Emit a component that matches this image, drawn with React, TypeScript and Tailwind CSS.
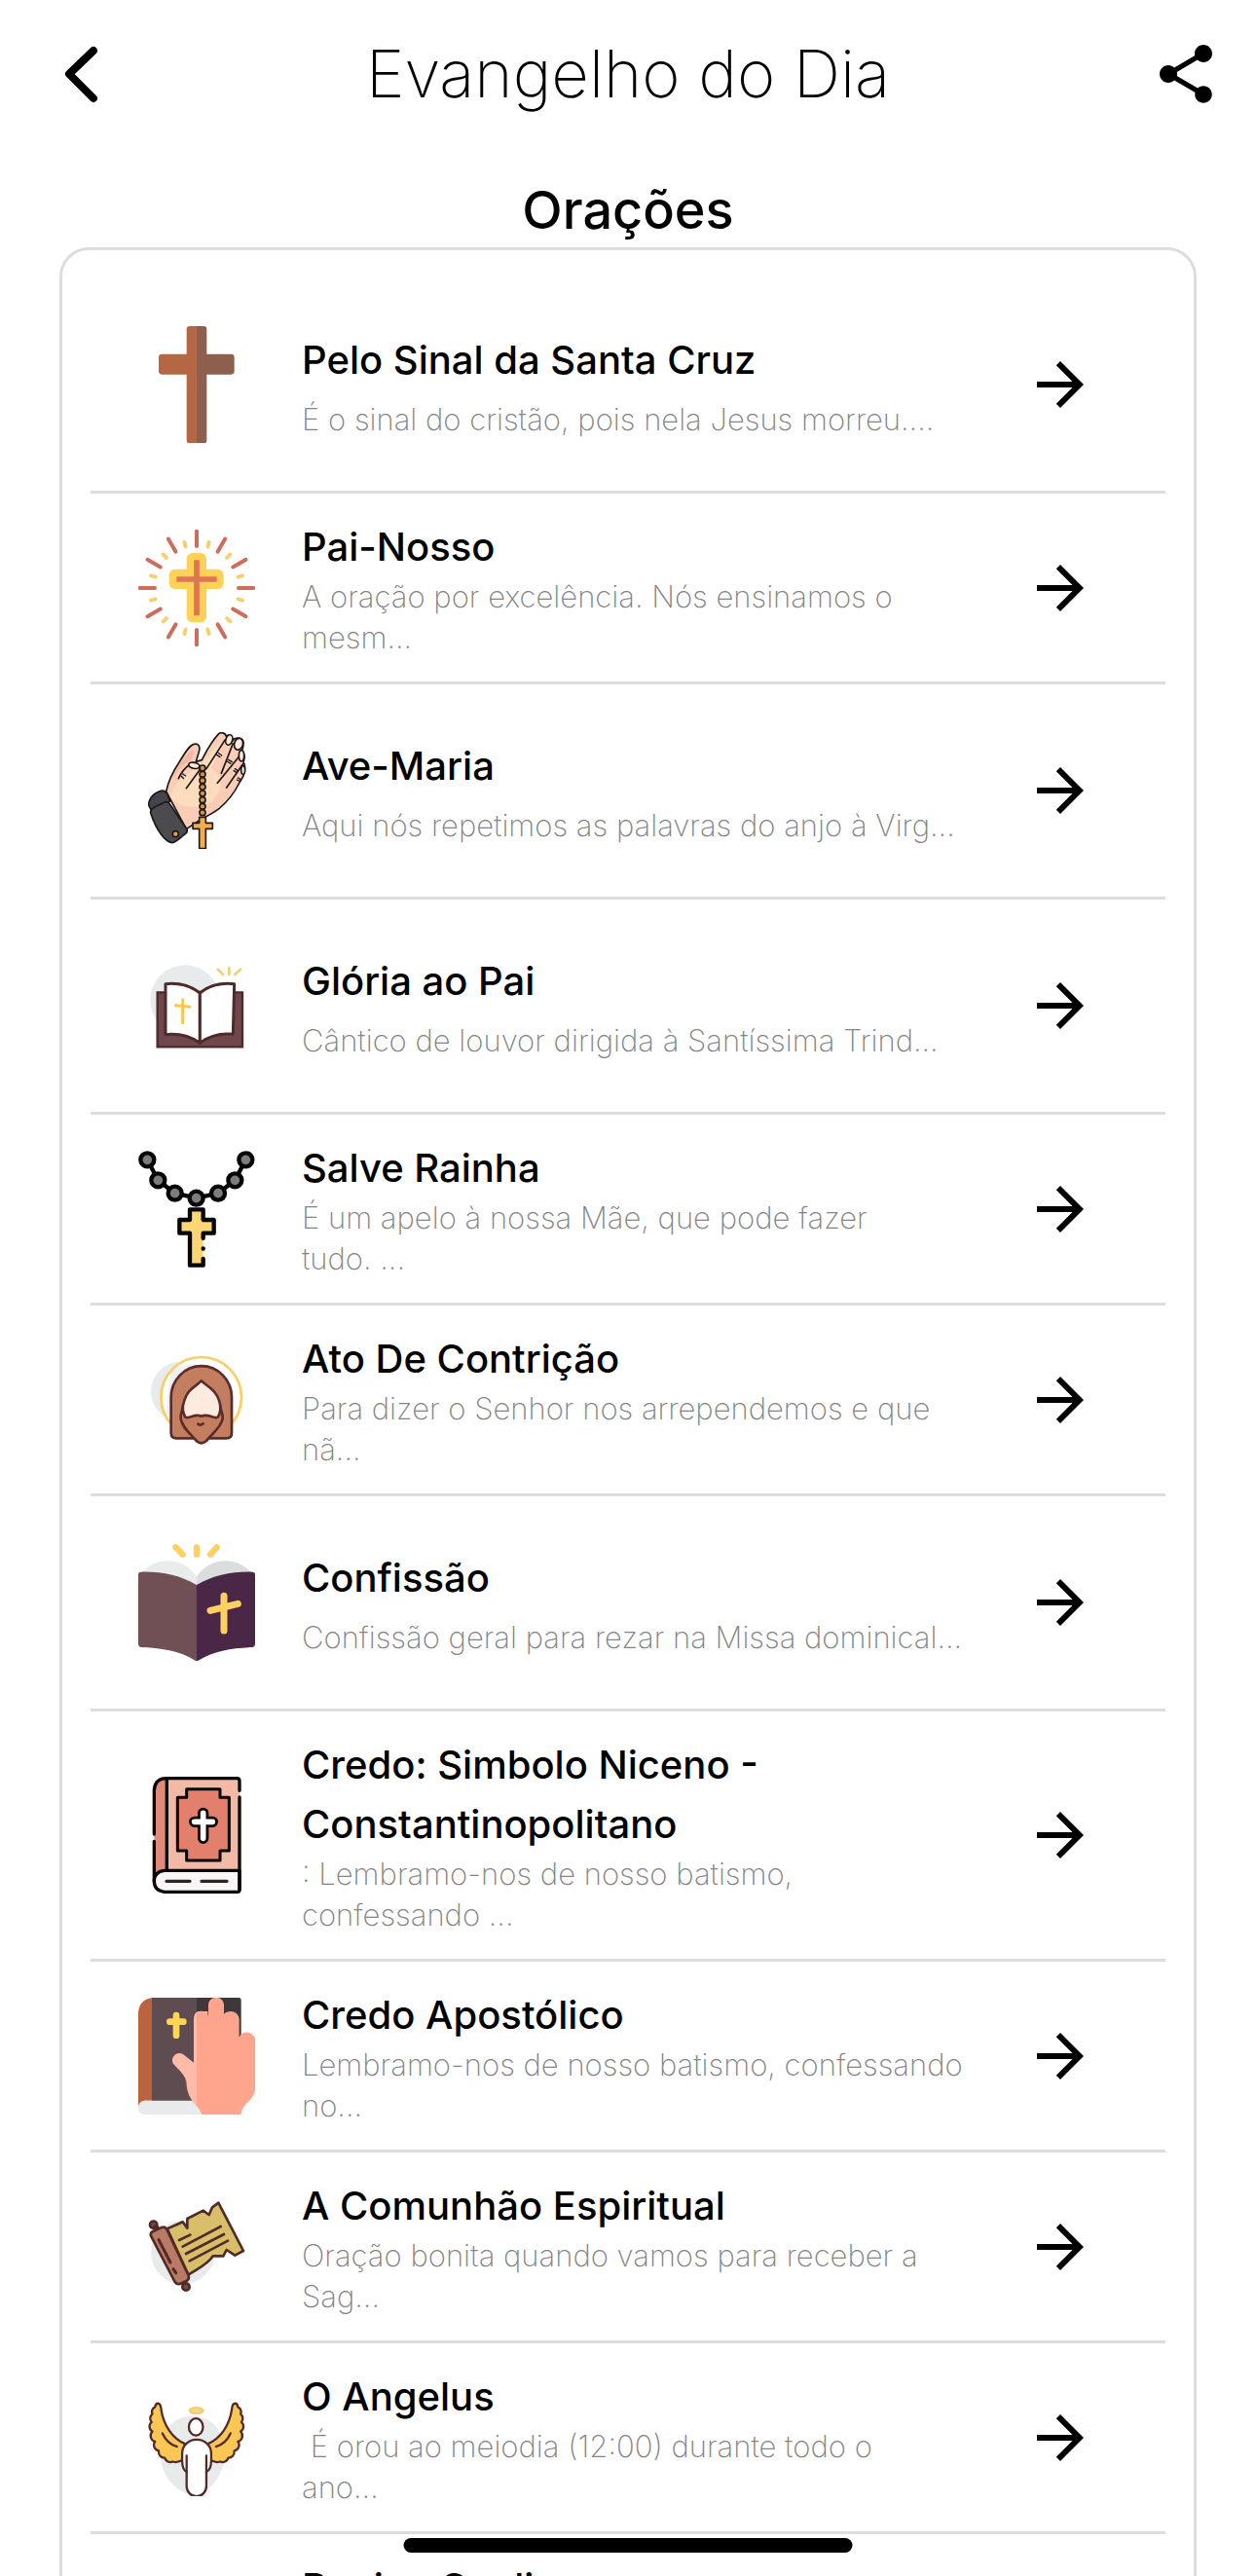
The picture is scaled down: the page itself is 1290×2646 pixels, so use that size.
import React from 'react';
import { MdArrowForward, MdShare } from 'react-icons/md';

const iconClass = 'w-[120px] h-[120px] shrink-0';

const WoodenCross = () => (
  <svg viewBox="66 78 360 360" className={iconClass} aria-hidden="true">
    <path fill="#b56643" d="M246 78h-21a10 10 0 0 0-10 10v76h-76a10 10 0 0 0-10 10v43a10 10 0 0 0 10 10h76v203a10 10 0 0 0 10 10h21z" />
    <path fill="#8d5f4c" d="M246 78h21a10 10 0 0 1 10 10v76h75a10 10 0 0 1 10 10v43a10 10 0 0 1-10 10h-75v203a10 10 0 0 1-10 10h-21z" />
  </svg>
);

const ShiningCross = () => (
  <svg viewBox="66 704 360 360" className={iconClass} strokeLinecap="round" aria-hidden="true">
    {[0, 30, 60, 90, 120, 150, 180, 210, 240, 270, 300, 330].map((angle) => (
      <g key={angle} transform={`rotate(${angle} 246 884)`}>
        <path d="M246 709v46" stroke="#ce6d5c" strokeWidth="12" />
        <path d="M246 738v14" stroke="#f5d070" strokeWidth="12" transform="rotate(15 246 884)" />
      </g>
    ))}
    <rect x="215" y="776" width="61" height="214" rx="18" fill="#ffd257" />
    <rect x="161" y="826" width="168" height="61" rx="18" fill="#ffd257" />
    <path d="M246 798v171M184 857h124" stroke="#e07552" strokeWidth="17" strokeLinecap="butt" />
  </svg>
);

const PrayingHands = () => (
  <svg viewBox="66 69 360 360" className={iconClass} stroke="#1c1818" strokeWidth="5" strokeLinecap="round" strokeLinejoin="round" fill="none" aria-hidden="true">
    <path fill="#fbcdb6" d="M152 252C158 222 172 192 192 162C208 136 222 110 238 106C252 103 258 114 253 130L244 160L262 155C278 122 298 92 312 76C320 68 334 70 337 82C344 74 358 80 356 96C364 84 388 84 390 100C391 112 388 120 385 126C394 134 394 150 390 162C397 172 395 184 392 194C392 206 382 216 376 228C362 256 340 284 316 304C300 316 282 326 262 336L214 368Z" />
    <path stroke="none" fill="#fddcbe" d="M164 268C176 232 205 200 250 178L300 120C320 90 330 100 322 120L290 180C325 200 330 250 290 285C255 310 190 305 164 268Z" />
    <path stroke="none" fill="#f4b8a0" d="M166 222C180 185 205 145 232 122C238 125 236 140 228 156C205 165 185 190 166 222Z" />
    <path d="M334 92L276 182M358 104L322 196M380 140L310 226M388 168L338 240M262 176L214 242M190 212C200 190 214 176 226 168" />
    <ellipse cx="238" cy="172" rx="17" ry="9" fill="#fde8dc" transform="rotate(12 238 172)" />
    <ellipse cx="346" cy="93" rx="10" ry="16" fill="#fde8dc" transform="rotate(18 346 93)" />
    <ellipse cx="375" cy="106" rx="13" ry="18" fill="#fde8dc" transform="rotate(15 375 106)" />
    <ellipse cx="384" cy="142" rx="8" ry="17" fill="#fde8dc" />
    <ellipse cx="389" cy="186" rx="6" ry="13" fill="#fde8dc" />
    <path strokeWidth="4" d="M306 138l12 8M312 133l11 8M339 159l12 7M344 154l11 7M360 188l10 6M364 182l9 6M370 216l10 5M373 210l9 5M198 204l8 8M203 198l9 6" />
    <path fill="#45444a" d="M102 302C92 288 104 262 130 252C145 246 153 252 156 262L164 282L110 318Z" />
    <path fill="#4b4a4e" d="M104 318C102 310 110 304 120 298L148 285C155 282 160 286 164 292L216 368C220 376 214 382 204 388C192 398 182 408 170 410C150 408 122 374 104 318Z" />
    <circle cx="181" cy="383" r="9" fill="#ee9d3c" />
    {[180, 199, 218, 238, 258, 278, 298, 317].map((cy) => (
      <circle key={cy} cx="264" cy={cy} r="9" fill="#d79440" />
    ))}
    <path fill="#f3ae4a" d="M254 331h20v18h21v18h-21v61h-20v-61h-20v-18h20z" />
  </svg>
);

const OpenBible = () => (
  <svg viewBox="66 729 360 360" className={iconClass} fill="none" aria-hidden="true">
    <circle cx="210" cy="891" r="107" fill="#e8ebeb" />
    <path d="M125 868h262v168H125z" fill="#6f474c" stroke="#4e2b2b" strokeWidth="7" />
    <g fill="#fff" stroke="#4e2b2b" strokeWidth="9" strokeLinejoin="round">
      <path d="M150 842C190 838 225 846 256 870V1024C225 1002 190 994 150 998Z" />
      <path d="M362 842C322 838 285 846 256 870V1024C285 1002 322 994 358 997Z" />
    </g>
    <path d="M203 890v72M181 908l44 5" stroke="#f3ca4e" strokeWidth="9" strokeLinecap="round" />
    <path d="M311 797l16 16M346 792v21M381 797l-17 16" stroke="#f3ce76" strokeWidth="8" strokeLinecap="round" />
  </svg>
);

const Rosary = () => (
  <svg viewBox="66 66 360 360" className={iconClass} stroke="#050505" strokeWidth="13" strokeLinecap="round" strokeLinejoin="round" aria-hidden="true">
    <path fill="none" d="M94 94L127 157L179 197L245 212L312 197L364 157L397 94" />
    <g fill="#7c7c7c">
      <circle cx="94" cy="94" r="21" />
      <circle cx="127" cy="157" r="21" />
      <circle cx="179" cy="197" r="21" />
      <circle cx="245" cy="212" r="21" />
      <circle cx="312" cy="197" r="21" />
      <circle cx="364" cy="157" r="21" />
      <circle cx="397" cy="94" r="21" />
    </g>
    <path stroke="none" fill="#fdd673" d="M225 247h41v32h33v41h-33v99h-41v-99h-32v-41h32z" />
    <path fill="none" d="M266 336v-16h33v-41h-33v-32h-41v32h-32v41h32v99h41v-20M266 367v1" />
  </svg>
);

const HoodedJesus = () => (
  <svg viewBox="66 654 360 360" className={iconClass} strokeWidth="8" strokeLinejoin="round" strokeLinecap="round" fill="none" aria-hidden="true">
    <circle cx="197" cy="808" r="92" fill="#e8ebeb" />
    <circle cx="260" cy="826" r="121" fill="#fff" />
    <path d="M165 750A92 92 0 0 1 245 728L180 790V880H150Z" fill="#eef1f1" />
    <circle cx="260" cy="826" r="124" stroke="#f6cf66" />
    <g stroke="#5b2c2b">
      <path d="M167 826A93 96 0 0 1 354 826V936Q354 952 338 952H183Q167 952 167 936Z" fill="#c37e60" />
      <path d="M204 850C202 868 195 878 197 892C202 922 228 938 246 961Q260 973 275 961C292 938 320 922 326 892C328 878 320 868 318 850" fill="#c37e60" />
      <path d="M260 775C240 796 218 800 207 838C201 856 202 872 211 887C226 894 238 874 260 884C284 874 296 894 311 887C321 872 321 856 316 838C305 802 282 795 260 775Z" fill="#fdebe0" />
      <path d="M250 908Q258 914 266 907" />
    </g>
  </svg>
);

const PurpleBible = () => (
  <svg viewBox="66 48 360 360" className={iconClass} strokeLinecap="round" aria-hidden="true">
    <path fill="#e9ecec" d="M78 136C118 86 206 84 246 150V180C190 146 130 134 78 136Z" />
    <path fill="#dadddd" d="M414 136C374 86 286 84 246 150V180C302 146 362 134 414 136Z" />
    <path fill="#704f55" d="M74 134C135 132 195 144 246 174V410C195 376 135 368 74 366Q66 364 66 356V142Q66 134 74 134Z" />
    <path fill="#4a2746" d="M418 134C357 132 297 144 246 174V410C297 376 357 368 418 366Q426 364 426 356V142Q426 134 418 134Z" />
    <path d="M330 208v107M288 253l85-21" stroke="#fecf62" strokeWidth="21" />
    <path d="M181 58l22 22M246 58v22M308 58l-20 22" stroke="#fecf62" strokeWidth="19" />
  </svg>
);

const RedBible = () => (
  <svg viewBox="66 765 360 360" className={iconClass} stroke="#090505" strokeWidth="10" strokeLinecap="round" strokeLinejoin="round" fill="none" aria-hidden="true">
    <path stroke="none" fill="#f1b9a6" d="M155 770h223v282H155z" />
    <path stroke="none" fill="#e28a7a" d="M155 770h-8q-32 5-32 38v279q6-33 40-35z" />
    <path d="M378 1054H146Q115 1058 115 1087T146 1120H372Q378 1120 378 1114Z" fill="#f8f6f6" />
    <path d="M115 942V806Q118 770 152 770H370Q378 770 378 778V808M378 828V1112M115 964V1087M154 772V1052" />
    <path strokeWidth="9" fill="#e27f6d" d="M215 803H318V829H346V993H318V1023H215V993H187V829H215Z" />
    <path strokeWidth="34" d="M266 877v78M239 904h56" />
    <path strokeWidth="17" stroke="#fff" d="M266 877v78M239 904h56" />
    <path strokeWidth="10" stroke="#2b2626" d="M153 1087h72M261 1087h78" />
  </svg>
);

const HandOnBible = () => (
  <svg viewBox="66 64 360 360" className={iconClass} aria-hidden="true">
    <path fill="#b9643f" d="M66 112Q68 68 112 64V381H84Q70 386 66 400Z" />
    <path fill="#5f4c50" d="M108 64h140v318H108z" />
    <path fill="#40373a" d="M246 64h130q7 0 7 8v140H246z" />
    <path fill="#e8ebeb" d="M88 381H262V425H88Q66 424 66 403T88 381Z" />
    <path d="M183 118v62M163 138h42" stroke="#ffd64f" strokeWidth="20" strokeLinecap="round" />
    <path fill="#ffbba8" d="M250 106C241 110 237 120 237 130V264L205 239C186 227 164 247 173 266C182 280 208 296 214 322C216 385 252 392 262 425H280V106Z" />
    <path fill="#ffa48d" d="M246 110C260 100 277 107 282 120V86C284 56 328 56 330 86V114C345 99 377 105 377 132V186C388 160 427 170 427 196V340C424 386 390 380 382 425H262C259 412 254 404 246 396Z" />
  </svg>
);

const Scroll = () => (
  <svg viewBox="66 654 360 360" className={iconClass} stroke="#512b27" strokeWidth="8" strokeLinejoin="round" strokeLinecap="round" aria-hidden="true">
    <circle cx="203" cy="851" r="98" fill="#e8ebeb" stroke="none" />
    <path fill="#d8bd6b" d="M155 778L203 757L217 776V747L266 722L284 735L294 712L313 698L390 846L364 860L338 843L328 862L296 862C280 888 250 900 220 920Z" />
    <path d="M192 813l34-16M203 833l117-62M213 855l117-60M224 877l118-62" />
    <circle cx="113" cy="766" r="11" fill="#7a4a40" />
    <path d="M120 774l8 12M203 938l6 12" strokeWidth="18" />
    <circle cx="213" cy="957" r="11" fill="#7a4a40" />
    <path fill="#b97a66" d="M105 800Q102 789 113 785L138 774Q148 770 154 780L221 922Q224 934 214 939L194 948Q184 950 179 942Z" />
    <path d="M129 812l36 70M174 902l8 12" strokeWidth="9" />
  </svg>
);

const wing =
  'M182 236C150 222 124 188 118 140C116 124 104 124 102 138A13 13 0 0 0 95 156A15 15 0 0 0 93 178A15 15 0 0 0 95 203A16 16 0 0 0 102 230A16 16 0 0 0 112 255A16 16 0 0 0 128 274A16 16 0 0 0 150 284C160 288 170 284 178 278Z';

const Angel = () => (
  <svg viewBox="57 63 314 314" className={iconClass} stroke="#512b27" strokeWidth="6" strokeLinejoin="round" strokeLinecap="round" fill="none" aria-hidden="true">
    <path stroke="none" fill="#e8ebeb" d="M202 162C260 162 290 210 290 262S250 372 205 372S116 320 116 262S150 162 202 162Z" />
    <g fill="#fac654">
      <path d={wing} />
      <path d={wing} transform="translate(427 0) scale(-1 1)" />
    </g>
    <path d="M122 208C130 226 142 238 161 244M305 208C297 226 285 238 266 244" />
    <ellipse cx="213" cy="147" rx="18" ry="8" fill="#f5d68e" stroke="#f2cc72" />
    <ellipse cx="212" cy="191" rx="19" ry="23" fill="#fff" />
    <path fill="#fff" d="M187 312Q176 306 175 284V262C175 238 195 225 214 225S253 238 253 262V284Q252 306 240 312V350A26 27 0 0 1 187 350Z" />
    <path d="M187 268v44M240 268v44" />
  </svg>
);

interface Prayer {
  title: string;
  description: string;
  icon: React.FC;
  short?: boolean;
}

const prayers: Prayer[] = [
  { title: 'Pelo Sinal da Santa Cruz', description: 'É o sinal do cristão, pois nela Jesus morreu....', icon: WoodenCross, short: true },
  { title: 'Pai-Nosso', description: 'A oração por excelência. Nós ensinamos o\nmesm...', icon: ShiningCross },
  { title: 'Ave-Maria', description: 'Aqui nós repetimos as palavras do anjo à Virg...', icon: PrayingHands, short: true },
  { title: 'Glória ao Pai', description: 'Cântico de louvor dirigida à Santíssima Trind...', icon: OpenBible, short: true },
  { title: 'Salve Rainha', description: 'É um apelo à nossa Mãe, que pode fazer\ntudo. ...', icon: Rosary },
  { title: 'Ato De Contrição', description: 'Para dizer o Senhor nos arrependemos e que\nnã...', icon: HoodedJesus },
  { title: 'Confissão', description: 'Confissão geral para rezar na Missa dominical...', icon: PurpleBible, short: true },
  { title: 'Credo: Simbolo Niceno - Constantinopolitano', description: ': Lembramo-nos de nosso batismo,\nconfessando ...', icon: RedBible },
  { title: 'Credo Apostólico', description: 'Lembramo-nos de nosso batismo, confessando\nno...', icon: HandOnBible },
  { title: 'A Comunhão Espiritual', description: 'Oração bonita quando vamos para receber a\nSag...', icon: Scroll },
  { title: 'O Angelus', description: '\u00a0É orou ao meiodia (12:00) durante todo o\nano...', icon: Angel },
  { title: 'Regina Coeli', description: '\n\n', icon: OpenBible },
];

const PrayerRow: React.FC<{ prayer: Prayer }> = ({ prayer }) => {
  const Icon = prayer.icon;
  return (
    <li className="border-b-3 border-[#dddddd]">
      <a
        href="#"
        className={`flex items-center pl-[49px] pr-[72px] ${prayer.short ? 'py-[49px]' : 'py-6'}`}
      >
        <Icon />
        <div className="ml-12 mr-8 flex-1 min-w-0">
          <h2 className="text-[40px] leading-[61px] font-medium text-black">{prayer.title}</h2>
          <p className={`text-[31px] leading-[42px] font-extralight text-[#858585] whitespace-pre-line ${prayer.short ? 'mt-[10px]' : ''}`}>
            {prayer.description}
          </p>
        </div>
        <MdArrowForward className="w-[72px] h-[72px] shrink-0 text-black" />
      </a>
    </li>
  );
};

export default function App() {
  return (
    <div className="h-screen overflow-hidden bg-white font-['Inter',sans-serif]">
      <header className="flex items-center justify-between pt-10 px-9">
        <button type="button" aria-label="Voltar" className="w-[72px] h-[72px]">
          <svg viewBox="0 0 72 72" className="w-[72px] h-[72px]" fill="none" stroke="#000" strokeWidth="8" strokeLinecap="round" strokeLinejoin="round">
            <path d="M60 12L35 36L60 61" />
          </svg>
        </button>
        <h1 className="text-[67px] leading-[72px] font-extralight text-black">Evangelho do Dia</h1>
        <button type="button" aria-label="Compartilhar" className="w-[72px] h-[72px]">
          <MdShare className="w-[72px] h-[72px] text-black" />
        </button>
      </header>

      <main>
        <p className="mt-[68px] text-[54px] leading-[72px] font-medium text-center text-black">Orações</p>
        <ul className="mt-[2px] mx-[61px] px-[29px] pt-[29px] border-3 border-[#dddddd] rounded-[30px]">
          {prayers.map((prayer) => (
            <PrayerRow key={prayer.title} prayer={prayer} />
          ))}
        </ul>
      </main>

      {/* Home indicator */}
      <div className="fixed bottom-6 left-1/2 -translate-x-1/2 w-[461px] h-[15px] rounded-full bg-black" />
    </div>
  );
}
